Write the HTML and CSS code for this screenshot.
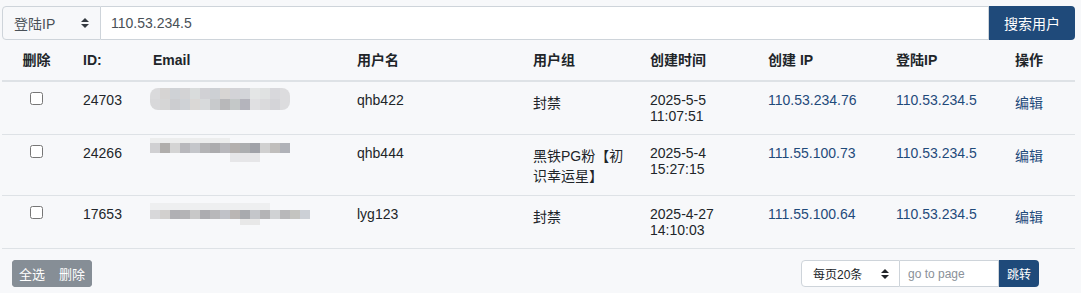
FILE: index.html
```html
<!DOCTYPE html>
<html lang="zh">
<head>
<meta charset="utf-8">
<title>用户管理</title>
<link rel="stylesheet" href="styles.css">
</head>
<body>
<div class="page">
  <form class="search">
    <div class="select">
      <span>登陆IP</span>
      <svg class="updown" width="8" height="10" viewBox="0 0 8 10"><path d="M4 0L8 4H0Z M0 6H8L4 10Z" fill="#343a40"/></svg>
    </div>
    <input class="search-input" type="text" value="110.53.234.5">
    <button class="btn-primary search-btn" type="button">搜索用户</button>
  </form>

  <table class="users">
    <colgroup>
      <col class="c1"><col class="c2"><col class="c3"><col class="c4"><col class="c5"><col class="c6"><col class="c7"><col class="c8"><col class="c9">
    </colgroup>
    <thead>
      <tr>
        <th class="center">删除</th><th>ID:</th><th>Email</th><th>用户名</th><th>用户组</th><th>创建时间</th><th>创建 IP</th><th>登陆IP</th><th>操作</th>
      </tr>
    </thead>
    <tbody>
      <tr>
        <td class="center"><input type="checkbox" class="chk"></td>
        <td>24703</td>
        <td><div class="blur blur1"><div class="b1a"></div><div class="b1b"></div></div></td>
        <td>qhb422</td>
        <td>封禁</td>
        <td>2025-5-5 11:07:51</td>
        <td class="ip">110.53.234.76</td>
        <td class="ip">110.53.234.5</td>
        <td><a class="edit" href="#">编辑</a></td>
      </tr>
      <tr>
        <td class="center"><input type="checkbox" class="chk"></td>
        <td>24266</td>
        <td><div class="blur blur2"><div class="b2top"></div><div class="b2main"></div><div class="b2bot"></div></div></td>
        <td>qhb444</td>
        <td>黑铁PG粉【初识幸运星】</td>
        <td>2025-5-4 15:27:15</td>
        <td class="ip">111.55.100.73</td>
        <td class="ip">110.53.234.5</td>
        <td><a class="edit" href="#">编辑</a></td>
      </tr>
      <tr>
        <td class="center"><input type="checkbox" class="chk"></td>
        <td>17653</td>
        <td><div class="blur blur3"><div class="b3top"></div><div class="b3main"></div><div class="b3bot"></div></div></td>
        <td>lyg123</td>
        <td>封禁</td>
        <td>2025-4-27 14:10:03</td>
        <td class="ip">111.55.100.64</td>
        <td class="ip">110.53.234.5</td>
        <td><a class="edit" href="#">编辑</a></td>
      </tr>
    </tbody>
  </table>

  <div class="footer">
    <div class="btn-group">
      <button type="button" class="btn-gray">全选</button><button type="button" class="btn-gray">删除</button>
    </div>
    <div class="pager">
      <div class="select small-select">
        <span>每页20条</span>
        <svg class="updown" width="8" height="10" viewBox="0 0 8 10"><path d="M4 0L8 4H0Z M0 6H8L4 10Z" fill="#212529"/></svg>
      </div>
      <input class="page-input" type="text" placeholder="go to page">
      <button type="button" class="btn-primary jump">跳转</button>
    </div>
  </div>
</div>
</body>
</html>
```

FILE: styles.css
```css
* { box-sizing: border-box; }

html, body {
  margin: 0;
  background: #f7f8fa;
}

body {
  font-family: "Liberation Sans", "Noto Sans CJK SC", sans-serif;
  font-size: 14px;
  color: #212529;
}

.page {
  padding: 6px 6px 0 2px;
}

/* search bar */
.search {
  display: flex;
  height: 34px;
  margin: 0;
}

.select {
  display: flex;
  align-items: center;
  justify-content: space-between;
  width: 99px;
  height: 100%;
  padding: 0 11px 0 11px;
  background: #f7f8fa;
  border: 1px solid #ced4da;
  border-radius: 4px 0 0 4px;
  color: #495057;
}

.search-input {
  flex: 1;
  height: 100%;
  border: 1px solid #ced4da;
  border-left: 0;
  background: #fff;
  padding: 0 10px;
  font: inherit;
  color: #495057;
  outline: none;
}

.btn-primary {
  background: #1f4a7a;
  color: #fff;
  border: 0;
  font-family: inherit;
  cursor: pointer;
}

.search-btn {
  width: 86px;
  height: 100%;
  font-size: 14px;
  border-radius: 0 4px 4px 0;
  padding: 0;
}

/* table */
.users {
  width: 1073px;
  border-collapse: collapse;
  table-layout: fixed;
}

.c1 { width: 69px; }
.c2 { width: 70px; }
.c3 { width: 204px; }
.c4 { width: 176px; }
.c5 { width: 117px; }
.c6 { width: 118px; }
.c7 { width: 128px; }
.c8 { width: 119px; }
.c9 { width: 72px; }

.users th {
  text-align: left;
  font-weight: bold;
  padding: 10px 12px;
  line-height: 20px;
  border-bottom: 2px solid #dee2e6;
}

.users td {
  padding: 10px 12px;
  vertical-align: top;
  border-bottom: 1px solid #dee2e6;
  line-height: normal;
}

.users .center { text-align: center; }

.chk {
  display: block;
  margin: 0 auto;
  width: 13px;
  height: 13px;
}

.ip { color: #1f4a7a; }

.edit {
  color: #1f4a7a;
  text-decoration: none;
}

/* blurred email mosaic */
.blur { margin-left: -3px; }

.blur1 {
  width: 140px;
  margin-top: -4px;
  border-radius: 8px;
  overflow: hidden;
}
.b1a, .b1b { height: 11px; }
.b1a {
  background: linear-gradient(90deg,
    #dadadc 0 10px, #d6d4d3 10px 20px, #cfd2d6 20px 30px, #d3d3d5 30px 40px,
    #d9dcdc 40px 50px, #d1d1d5 50px 60px, #cdd0d4 60px 70px, #d7d5d3 70px 80px,
    #d3d3d7 80px 90px, #d3d5d9 90px 100px, #e4e6e6 100px 110px, #e0e2e2 110px 120px,
    #d8d8dc 120px 130px, #dcdcde 130px 140px);
}
.b1b {
  background: linear-gradient(90deg,
    #d8d8da 0 10px, #d6d6d6 10px 20px, #cccdd0 20px 30px, #cfd2d6 30px 40px,
    #dad8d6 40px 50px, #d8dadc 50px 60px, #c8cacc 60px 70px, #b8b8ba 70px 80px,
    #c4c8c8 80px 90px, #b4b4bc 90px 100px, #e0e0e2 100px 110px, #dadadc 110px 120px,
    #d4d4d8 120px 130px, #dcdcde 130px 140px);
}

.blur2 { margin-top: -7px; }
.b2top { width: 80px; height: 5px; background: #eceded; }
.b2main {
  width: 140px;
  height: 10px;
  background: linear-gradient(90deg,
    #d0d0d2 0 10px, #b0aeac 10px 20px, #d4d4d4 20px 30px, #b8b8bc 30px 40px,
    #c4c6ca 40px 50px, #b4b4b6 50px 60px, #acacae 60px 70px, #b8b8bc 70px 80px,
    #b4b0ae 80px 90px, #acaeb0 90px 100px, #a0a2a8 100px 110px, #d0d0d0 110px 120px,
    #c0bebc 120px 130px, #b0b2b8 130px 140px);
}
.b2bot { width: 30px; height: 9px; margin-left: 80px; background: #e6e6e8; }

.blur3 { margin-top: -3px; }
.b3top { width: 120px; height: 7px; background: #eeeff0; }
.b3main {
  width: 160px;
  height: 9px;
  background: linear-gradient(90deg,
    #d8d8da 0 10px, #d2d0ce 10px 20px, #b0b0b4 20px 30px, #b4b4b6 30px 40px,
    #c8c8c8 40px 50px, #acacb0 50px 60px, #b8b8ba 60px 70px, #c0c2c8 70px 80px,
    #bab6b4 80px 90px, #a8aaae 90px 100px, #c4c6ca 100px 110px, #b4b4b6 110px 120px,
    #d0d2d4 120px 130px, #b8b8ba 130px 140px, #c4c4c0 140px 150px, #ccd0d6 150px 160px);
}
.b3bot { width: 20px; height: 6px; margin-left: 90px; background: #e8e8e8; }

/* footer */
.footer {
  display: flex;
  justify-content: space-between;
  align-items: center;
  padding: 11px 36px 0 10px;
}

.btn-group {
  display: flex;
  background: #868e96;
  border-radius: 4px;
  overflow: hidden;
}

.btn-gray {
  height: 27px;
  width: 40px;
  padding: 0;
  border: 0;
  background: #868e96;
  color: #fff;
  font-family: inherit;
  font-size: 13px;
}

.pager {
  display: flex;
  height: 27px;
}

.small-select {
  width: 99px;
  background: #fff;
  font-size: 12px;
  color: #212529;
  padding: 0 10px 0 11px;
}

.page-input {
  width: 99px;
  height: 100%;
  border: 1px solid #ced4da;
  border-left: 0;
  background: #fff;
  padding: 0 8px;
  font-family: inherit;
  font-size: 12px;
  outline: none;
}

.page-input::placeholder { color: #8a9199; }

.jump {
  width: 40px;
  height: 100%;
  font-size: 12px;
  border-radius: 0 4px 4px 0;
  padding: 0;
}
```
